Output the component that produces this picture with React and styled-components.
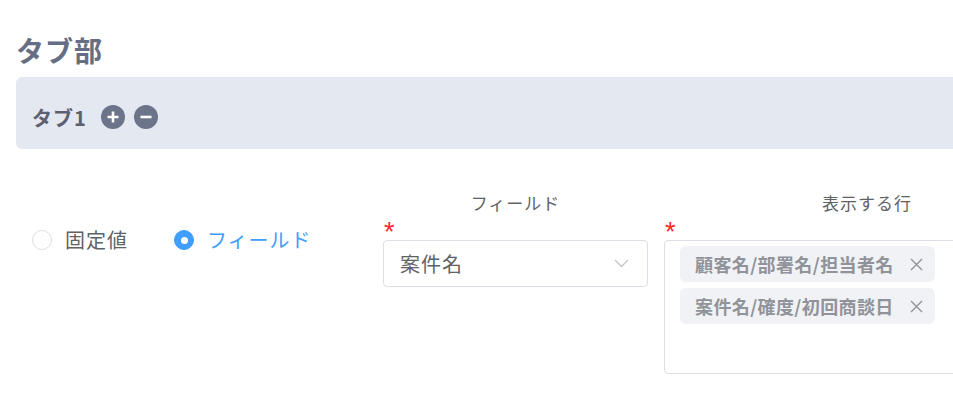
import React, { useState } from "react";
import styled, { createGlobalStyle } from "styled-components";

const GlobalStyle = createGlobalStyle`
  html, body {
    margin: 0;
    padding: 0;
    background: #ffffff;
    overflow: hidden;
  }
  body {
    font-family: "Noto Sans CJK JP", "Noto Sans", sans-serif;
  }
`;

const Page = styled.div`
  width: 1100px;
  padding: 33px 16px 0;
`;

const Title = styled.h2`
  margin: 0 0 10px;
  font-size: 28px;
  line-height: 34px;
  font-weight: 700;
  letter-spacing: 1px;
  color: #656e83;
`;

const TabBar = styled.div`
  height: 72px;
  background: #e4e8f1;
  border-radius: 6px;
  display: flex;
  align-items: center;
  padding: 8px 16px 0;
  box-sizing: border-box;
  gap: 9px;
`;

const TabName = styled.span`
  font-size: 20px;
  font-weight: 700;
  letter-spacing: 1px;
  color: #5c6070;
  margin-right: 5px;
`;

const RoundButton = styled.button`
  width: 24px;
  height: 24px;
  border-radius: 50%;
  border: none;
  padding: 0;
  background: #6b7489;
  display: flex;
  align-items: center;
  justify-content: center;
  cursor: pointer;
`;

const Row = styled.div`
  display: flex;
  align-items: flex-start;
  margin-top: 42px;
  padding-left: 16px;
`;

const RadioGroup = styled.div`
  width: 351px;
  display: flex;
  gap: 46px;
  padding-top: 38px;
`;

const RadioLabel = styled.label`
  display: flex;
  align-items: center;
  gap: 13px;
  font-size: 20px;
  line-height: 22px;
  letter-spacing: 1px;
  color: ${({ checked }) => (checked ? "#409eff" : "#606266")};
  cursor: pointer;
`;

const RadioDot = styled.span`
  width: 20px;
  height: 20px;
  box-sizing: border-box;
  border-radius: 50%;
  border: 1px solid ${({ checked }) => (checked ? "#409eff" : "#dcdfe6")};
  background: ${({ checked }) => (checked ? "#409eff" : "#fff")};
  display: flex;
  align-items: center;
  justify-content: center;

  &::after {
    content: "";
    width: 7px;
    height: 7px;
    border-radius: 50%;
    background: #fff;
    display: ${({ checked }) => (checked ? "block" : "none")};
  }
`;

const Column = styled.div`
  width: ${({ w }) => w}px;
  margin-right: ${({ gap }) => gap || 0}px;
  display: flex;
  flex-direction: column;
`;

const ColLabel = styled.div`
  text-align: center;
  font-size: 17px;
  line-height: 24px;
  letter-spacing: 1px;
  color: #606266;
`;

const Required = styled.div`
  height: 25px;
  color: #ff2a2a;
  font-family: "Liberation Sans", Arial, sans-serif;
  font-size: 27px;
  line-height: 34px;
  padding-left: 1px;
`;

const Select = styled.div`
  height: 47px;
  box-sizing: border-box;
  border: 1px solid #dcdfe6;
  border-radius: 4px;
  display: flex;
  align-items: center;
  justify-content: space-between;
  padding: 0 18px 0 16px;
  font-size: 20px;
  letter-spacing: 1px;
  color: #606266;
`;

const TagBox = styled.div`
  height: 134px;
  box-sizing: border-box;
  border: 1px solid #dcdfe6;
  border-radius: 4px;
  padding: 5px 15px;
  display: flex;
  flex-direction: column;
  align-items: flex-start;
  gap: 6px;
`;

const Tag = styled.span`
  height: 36px;
  width: 255px;
  box-sizing: border-box;
  background: #f0f2f5;
  border-radius: 6px;
  display: flex;
  align-items: center;
  justify-content: space-between;
  padding: 0 12px 0 15px;
  font-size: 18px;
  font-weight: 700;
  letter-spacing: 0.4px;
  color: #909399;
`;

const Chevron = () => (
  <svg width="15" height="9" viewBox="0 0 15 9" fill="none">
    <path d="M1 1l6.5 6.5L14 1" stroke="#c0c4cc" strokeWidth="1.3" />
  </svg>
);

const CloseIcon = () => (
  <svg width="13" height="13" viewBox="0 0 13 13" fill="none">
    <path d="M1 1l11 11M12 1L1 12" stroke="#909399" strokeWidth="1.4" />
  </svg>
);

const PlusIcon = () => (
  <svg width="14" height="14" viewBox="0 0 14 14">
    <path d="M7 1.5v11M1.5 7h11" stroke="#fff" strokeWidth="2.6" />
  </svg>
);

const MinusIcon = () => (
  <svg width="14" height="14" viewBox="0 0 14 14">
    <path d="M1.5 7h11" stroke="#fff" strokeWidth="2.6" />
  </svg>
);

export default function App() {
  const [mode, setMode] = useState("field");
  const tags = ["顧客名/部署名/担当者名", "案件名/確度/初回商談日"];

  return (
    <>
      <GlobalStyle />
      <Page>
        <Title>タブ部</Title>
        <TabBar>
          <TabName>タブ1</TabName>
          <RoundButton aria-label="add">
            <PlusIcon />
          </RoundButton>
          <RoundButton aria-label="remove">
            <MinusIcon />
          </RoundButton>
        </TabBar>

        <Row>
          <RadioGroup>
            <RadioLabel checked={mode === "fixed"} onClick={() => setMode("fixed")}>
              <RadioDot checked={mode === "fixed"} />
              固定値
            </RadioLabel>
            <RadioLabel checked={mode === "field"} onClick={() => setMode("field")}>
              <RadioDot checked={mode === "field"} />
              フィールド
            </RadioLabel>
          </RadioGroup>

          <Column w={265} gap={16}>
            <ColLabel>フィールド</ColLabel>
            <Required>*</Required>
            <Select>
              案件名
              <Chevron />
            </Select>
          </Column>

          <Column w={406}>
            <ColLabel>表示する行</ColLabel>
            <Required>*</Required>
            <TagBox>
              {tags.map((t) => (
                <Tag key={t}>
                  {t}
                  <CloseIcon />
                </Tag>
              ))}
            </TagBox>
          </Column>
        </Row>
      </Page>
    </>
  );
}
